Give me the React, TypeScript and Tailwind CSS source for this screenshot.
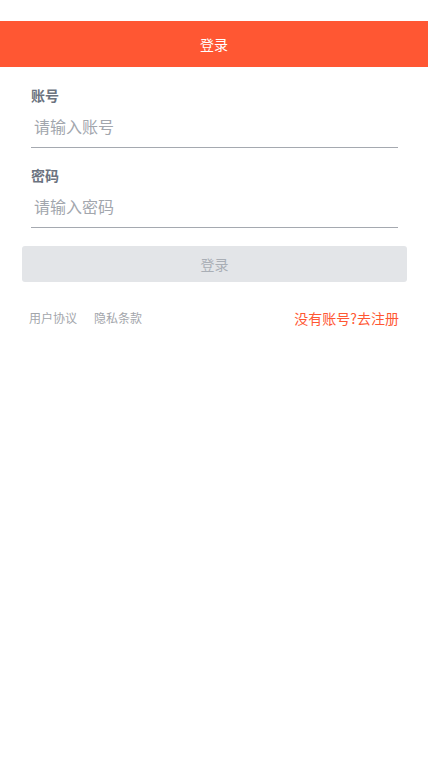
import { useState } from 'react'

export default function App() {
  const [account, setAccount] = useState('')
  const [password, setPassword] = useState('')
  const canSubmit = account !== '' && password !== ''

  return (
    <div
      className="min-h-screen bg-white"
      style={{ fontFamily: '"Noto Sans CJK SC", "Noto Sans", sans-serif' }}
    >
      {/* status bar space */}
      <div className="h-[21px]" />

      {/* Header */}
      <div className="h-[46px] bg-[#ff5733] flex items-center justify-center">
        <span className="text-[14px] text-white">登录</span>
      </div>

      {/* Form */}
      <div className="pl-[31px] pr-[30px] pt-[18px]">
        <div className="text-[14px] leading-[20px] font-bold text-[#6b7380]">账号</div>
        <input
          type="text"
          placeholder="请输入账号"
          value={account}
          onChange={(e) => setAccount(e.target.value)}
          className="block w-full h-[43px] px-[3px] text-[16px] text-[#333] placeholder:text-[#a2a6ad] border-b border-[#a5a9b0] outline-none bg-transparent"
        />

        <div className="mt-[17px] text-[14px] leading-[20px] font-bold text-[#6b7380]">密码</div>
        <input
          type="password"
          placeholder="请输入密码"
          value={password}
          onChange={(e) => setPassword(e.target.value)}
          className="block w-full h-[43px] px-[3px] text-[16px] text-[#333] placeholder:text-[#a2a6ad] border-b border-[#a5a9b0] outline-none bg-transparent"
        />
      </div>

      <div className="pl-[22px] pr-[21px] mt-[18px]">
        <button
          disabled={!canSubmit}
          className={
            canSubmit
              ? 'w-full h-[36px] rounded-[3px] bg-[#ff5733] text-white text-[14px]'
              : 'w-full h-[36px] rounded-[3px] bg-[#e3e5e8] text-[#a9aeb5] text-[14px]'
          }
        >
          登录
        </button>
      </div>

      {/* Footer links */}
      <div className="mt-[26px] px-[29px] flex items-center justify-between">
        <div className="flex items-center gap-[17px] text-[12px] leading-[20px] text-[#a3a6ab]">
          <span>用户协议</span>
          <span>隐私条款</span>
        </div>
        <span className="text-[14px] leading-[20px] text-[#ff5733]">没有账号?去注册</span>
      </div>
    </div>
  )
}
